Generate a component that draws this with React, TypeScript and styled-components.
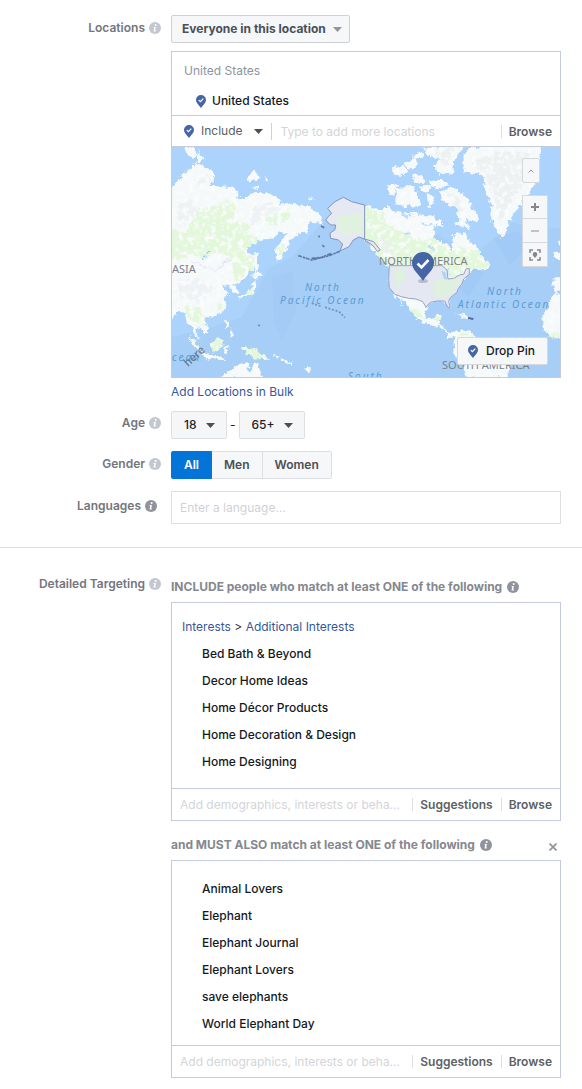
import React, { useState } from "react";
import styled, { createGlobalStyle, css } from "styled-components";

const GlobalStyle = createGlobalStyle`
  *, *::before, *::after { box-sizing: border-box; }
  body {
    margin: 0;
    background: #fff;
    color: #1d2129;
    font-family: Inter, "Liberation Sans", sans-serif;
    font-size: 12px;
    line-height: 20px;
  }
  button, input, select { font: inherit; color: inherit; margin: 0; }
  ul { list-style: none; margin: 0; padding: 0; }
`;

const Page = styled.main`
  padding-top: 15px;
`;

const Section = styled.section`
  display: grid;
  grid-template-columns: 161px minmax(0, 1fr);
  column-gap: 10px;
  padding-right: 21px;
`;

const FieldLabel = styled.div<{ $dark?: boolean; $top?: number }>`
  display: flex;
  justify-content: flex-end;
  align-items: center;
  gap: 4px;
  height: 20px;
  margin-top: ${(p) => p.$top ?? 3}px;
  padding-right: ${(p) => (p.$dark ? 4 : 0)}px;
  color: #73767c;
  font-weight: 600;
`;

const Field = styled.div<{ $gap: number }>`
  margin-bottom: ${(p) => p.$gap}px;
`;

const InfoButton = styled.button<{ $dark?: boolean }>`
  display: block;
  flex: none;
  width: 12px;
  height: 12px;
  padding: 0;
  border: 0;
  background: none;
  color: ${(p) => (p.$dark ? "#90939c" : "#c3c7cf")};
  svg { display: block; }
`;

const AudienceButton = styled.button`
  display: inline-flex;
  align-items: center;
  gap: 7px;
  height: 28px;
  padding: 0 7px 0 10px;
  border: 1px solid #ced0d4;
  border-radius: 2px;
  background: #f6f7f9;
  color: #4b4f56;
  font-weight: 700;
`;

const Box = styled.div`
  border: 1px solid #c3cbdc;
  background: #fff;
`;

const LocationBox = styled(Box)`
  margin-top: 8px;
`;

const LocationList = styled.div`
  padding: 9px 12px 4px;
`;

const Country = styled.div`
  color: #90949c;
`;

const Place = styled.div`
  display: flex;
  align-items: center;
  gap: 6px;
  padding: 10px 0 0 12px;
  font-weight: 500;
  color: #141823;
`;

const Footer = styled.div<{ $left: number; $height: number }>`
  display: flex;
  align-items: center;
  height: ${(p) => p.$height}px;
  padding: 0 8px 0 ${(p) => p.$left}px;
  border-top: 1px solid #c3cbdc;
`;

const IncludeButton = styled.button`
  display: flex;
  align-items: center;
  gap: 7px;
  padding: 0 8px 0 0;
  height: 17px;
  border: 0;
  border-right: 1px solid #ccd0d9;
  background: none;
  color: #5a5e66;
  svg:last-child { margin-left: 4px; }
`;

const Search = styled.input<{ $left: number }>`
  flex: 1;
  min-width: 0;
  padding: 1px 12px 0 ${(p) => p.$left}px;
  border: 0;
  outline: 0;
  background: none;
  text-overflow: ellipsis;
  &::placeholder { color: #d3d5d9; opacity: 1; }
`;

const FooterButton = styled.button`
  height: 13px;
  padding: 0 8px 0 7px;
  border: 0;
  border-left: 1px solid #dddfe2;
  background: none;
  color: #5c5f66;
  font-weight: 600;
  line-height: 13px;
  &:last-child { padding-right: 0; }
`;

const MapView = styled.div`
  position: relative;
  height: 231px;
  overflow: hidden;
  border-top: 1px solid #c3cbdc;
  background: #a9d2f9;
`;

const MapDrawing = styled.svg`
  display: block;
  width: 100%;
  height: 100%;
`;

const mapControl = css`
  display: flex;
  align-items: center;
  justify-content: center;
  padding: 0;
  border: 1px solid #d6d8db;
  background: #f6f7f8;
`;

const CollapseButton = styled.button`
  ${mapControl}
  position: absolute;
  top: 11px;
  right: 20px;
  width: 18px;
  height: 25px;
  border-radius: 2px;
`;

const ZoomControls = styled.div`
  position: absolute;
  top: 48px;
  right: 12px;
  width: 26px;
`;

const ZoomButton = styled.button`
  ${mapControl}
  width: 100%;
  height: 24px;
  & + & { border-top: 0; }
`;

const DropPin = styled.button`
  ${mapControl}
  position: absolute;
  right: 12px;
  bottom: 12px;
  gap: 8px;
  width: 91px;
  height: 28px;
  padding-right: 2px;
  border-radius: 2px;
  font-weight: 500;
  color: #141823;
`;

const Link = styled.a`
  color: #365899;
  text-decoration: none;
`;

const BulkLink = styled(Link)`
  display: block;
  margin-top: 4px;
`;

const AgeRange = styled.div`
  display: flex;
  align-items: center;
  gap: 3px;
`;

const SelectWrap = styled.span<{ $width: number }>`
  position: relative;
  display: block;
  width: ${(p) => p.$width}px;
  svg {
    position: absolute;
    right: 12px;
    top: 12px;
    pointer-events: none;
  }
`;

const Select = styled.select`
  appearance: none;
  display: block;
  width: 100%;
  height: 28px;
  padding: 0 12px;
  border: 1px solid #dddfe2;
  border-radius: 2px;
  background: #f5f6f7;
  color: #1d2129;
  font-weight: 500;
`;

const Segments = styled.div`
  display: flex;
`;

const Segment = styled.label`
  height: 28px;
  padding: 0 12px;
  border: 1px solid #dddfe2;
  background: #f6f7f9;
  color: #4b4f56;
  font-weight: 600;
  line-height: 26px;
  & + & { border-left: 0; }
  &:first-child { border-radius: 2px 0 0 2px; }
  &:last-child { border-radius: 0 2px 2px 0; }
  &:has(:checked) {
    border-color: #0474d8;
    background: #0474d8;
    color: #fff;
  }
`;

const HiddenRadio = styled.input`
  position: absolute;
  opacity: 0;
  pointer-events: none;
`;

const LanguageInput = styled.input`
  display: block;
  width: 100%;
  height: 33px;
  padding: 0 8px;
  border: 1px solid #dddfe2;
  outline: 0;
  &::placeholder { color: #d0d2d6; opacity: 1; }
`;

const Divider = styled.hr`
  margin: 0 0 26px;
  border: 0;
  border-top: 1px solid #dddfe2;
`;

const Rules = styled.div`
  display: grid;
  gap: 14px;
  padding: 3px 0 10px;
`;

const RuleHeading = styled.div`
  display: flex;
  align-items: center;
  gap: 5px;
  height: 20px;
  margin-bottom: 5px;
  color: #85888e;
  font-weight: 700;
`;

const RemoveButton = styled.button`
  margin-left: auto;
  padding: 3px 4px 0;
  border: 0;
  background: none;
  color: #90949c;
  svg { display: block; }
`;

const Breadcrumb = styled.nav`
  padding-left: 10px;
  line-height: 27px;
`;

const Interests = styled.div<{ $top: number; $bottom: number }>`
  padding: ${(p) => p.$top}px 0 ${(p) => p.$bottom}px;
`;

const Interest = styled.li`
  padding-left: 30px;
  line-height: 27px;
  font-weight: 500;
  color: #141823;
`;

const Info = ({ about, dark }: { about: string; dark?: boolean }) => (
  <InfoButton type="button" aria-label={`About ${about}`} $dark={dark}>
    <svg width="12" height="12" viewBox="0 0 12 12">
      <circle cx="6" cy="6" r="6" fill="currentColor" />
      <circle cx="6.7" cy="3" r="1" fill="#fff" />
      <path d="M4.7 5h2.2L6.2 8.6h.8l-.2 1H4.5l.7-3.6h-.7z" fill="#fff" />
    </svg>
  </InfoButton>
);

const Caret = ({ color = "#4b4f56" }: { color?: string }) => (
  <svg width="9" height="5" viewBox="0 0 9 5">
    <path d="M0 0h9L4.500 5z" fill={color} />
  </svg>
);

const Pin = () => (
  <svg width="10" height="13" viewBox="0 0 10 13">
    <path d="M5 0a5 5 0 0 1 5 5c0 3-3 5-5 8C3 10 0 8 0 5a5 5 0 0 1 5-5z" fill="#4565a5" />
    <path d="M2.800 5.100l1.600 1.500 2.900-3" fill="none" stroke="#fff" strokeWidth="1.300" />
  </svg>
);

const SEA_TEXT = {
  fill: "#5b9bd3",
  fontSize: 10,
  fontStyle: "italic",
  fontFamily: '"Noto Sans", sans-serif',
  letterSpacing: 2,
} as const;

const LAND_TEXT = {
  fill: "#7d8288",
  fontSize: 11,
  fontFamily: '"Noto Sans", sans-serif',
} as const;

const WorldMap = () => (
  <MapDrawing viewBox="0 0 388 230" preserveAspectRatio="xMidYMid slice" role="img" aria-label="World map">
    <defs>
      {/* ragged coastlines, with a mottled terrain over the land */}
      <filter id="coast" x="-5%" y="-5%" width="110%" height="110%" colorInterpolationFilters="sRGB">
        <feTurbulence type="fractalNoise" baseFrequency="0.200" numOctaves="3" seed="4" result="n" />
        <feDisplacementMap in="SourceGraphic" in2="n" scale="7" xChannelSelector="R" yChannelSelector="G" result="land" />
        <feTurbulence type="fractalNoise" baseFrequency="0.180" numOctaves="4" seed="9" />
        <feColorMatrix values="0 0 0 0 .98  0 0 0 0 .99  0 0 0 0 .99  4 0 0 0 -1.900" />
        <feComposite in2="land" operator="in" result="snow" />
        <feMerge><feMergeNode in="land" /><feMergeNode in="snow" /></feMerge>
      </filter>
    </defs>
    <rect width="388" height="230" fill="#a6cef7" />
    <path d="M0 0H388V82L340 76 300 110 270 90 190 62 160 68 150 76 120 110 96 122 70 170 40 180 0 190z" fill="#abd3fb" />
    <path d="M322 92l24-8 12 14-20 20zM286 140l14-20 12 6-16 24z" fill="#a2caf6" />
    <path d="M100 130l20-6 4 40-14 30-8-20z" fill="#a3cbf6" />

    {/* Asia, Australia and the Pacific islands */}
    <g filter="url(#coast)">
      <g transform="translate(-7 -2) scale(.3333)">
        <g fill="#f6f9fa">
          <path d="M0 132L20 128 45 100 70 75 95 55 125 70 150 80V105L135 120 165 125 205 125 220 140 215 155 245 160 262 145 300 143 335 155 350 165 345 178 400 178 430 185 460 205 475 222 468 235 440 230 432 240V262L410 265 390 275 370 290 362 320 345 345 335 350 330 320 345 290 365 265 345 262 325 280 300 285 270 288 250 305 247 325 268 330 272 350 262 375 240 400 215 415 205 420 222 440 218 450 205 445 198 425 175 420 180 435 190 440 178 465 183 490 165 505 140 515 120 518 118 530 132 545 125 565 105 550 95 545 92 565 105 590 115 600 95 580 85 560 80 540 65 530 60 505 40 500 20 525H0z" />
          <path d="M55 5H85L95 30 80 38 60 20zM100 15L118 45 95 52zM250 85L268 80 285 92 275 108 250 105zM297 98l12 2-3 10zM263 122l15 2 2 8-16-2zM430 155h12v8h-12z" />
          <path d="M268 320l12 8-2 40-8 12-4-30zM262 388l12-6 16 6-14 12-12 0zM266 402l8 18-8 22-24 8-16 14-4-10 22-10 18-12z" />
          <path d="M180 525l10 4 2 20-8 2zM194 552l15 18-12 8z" />
          <path d="M165 700L200 670 215 660 230 655 250 652 247 668 262 680 268 655 278 660 284 685 300 700z" />
          <path d="M72 572L90 585 115 628 100 618 82 598zM110 625L155 632 185 644 150 644 115 636zM178 600l18 2-14 10 8 16-12-6zM322 625l22 10-6 6zM205 600l10 0M350 640l35 14-4 8-30-14zM420 672l14-6v14z" />
        </g>
        <g fill="#e3f7db">
          <path d="M0 250L60 265 75 240 100 190 150 185 185 165 208 175 210 225 250 235 260 275 290 282 250 305 245 330 268 335 262 375 232 400 205 415 208 390 200 350 195 330 150 320 120 345 80 325 50 345 0 335z" />
          <path d="M300 220L345 200 375 190 375 215 345 240 305 232zM338 310l20-20 0 30-15 20zM60 480l30 5 32 25-5 35-20-8-35-25zM155 480l25-10 0 22-25 10zM235 446l32-20-4 14-22 10z" />
          <path d="M132 600L160 575 173 590 170 610 150 622 135 612zM225 605L250 608 285 618 300 635 318 645 295 645 270 640 240 622zM78 578l14 10 18 32-20-18z" />
        </g>
        <g fill="#ecf0f1" opacity=".7">
          <path d="M40 175l40-10 20 30-30 40-35 10zM90 105l40-15 10 15-40 20zM265 180l60-10 20 25-50 20-40 30zM40 405l50-5 60 30-50 40-50-10z" />
        </g>
        <path d="M112 342L122 335 134 316" stroke="#9bcbf5" strokeWidth="5" fill="none" />
        <path d="M75 350L110 362 150 375 170 365 172 350 200 345" stroke="#e2dff0" strokeWidth="3" fill="none" />
      </g>

      {/* the Americas, Greenland, Africa */}
      <g transform="translate(190 -2) scale(.3333)">
        <g fill="#f6f9fa">
          <path d="M0 180L30 185 55 195 75 185 100 200 130 205 160 200 185 215 210 210 225 225 215 250 212 275 240 290 262 305 270 320 275 300 270 275 285 262 312 270 322 290 345 305 360 330 330 345 345 355 372 345 385 368 360 375 335 370 320 388 300 410 290 430 270 450 262 465 266 490 252 480 250 467 225 468 195 482 188 500 192 520 215 525 222 508 240 512 230 535 248 550 265 568 290 555 330 562 352 585 400 590 440 650V700H315L300 660 280 630 275 600 280 578 262 578 240 550 200 538 165 522 150 498 130 470 112 452 125 485 118 475 100 450 85 430 78 400 82 370 60 345 40 320 0 275z" />
          <path d="M78 120L108 115 100 148 80 150zM105 130L150 120 168 150 178 182 130 186 100 172zM90 70l30-10 20 20-20 12-28-4zM125 60l25-20 20 15-25 20zM150 92l30-6 10 22-25 10zM178 120l25 0 0 25-22 0zM205 105l35 0 20 15-25 10-28-6zM195 150l22 0 0 30-18 5zM150 30l30-10 5 20-28 8z" />
          <path d="M178 12L240 4H305L288 30 272 60 272 88 235 86 212 62 240 42 200 32z" />
          <path d="M235 140L270 125 300 150 320 165 330 190 350 210 345 235 325 225 305 215 322 245 310 250 278 238 290 225 285 190 260 180 240 165zM215 225l20 0 5 22-18-4z" />
          <path d="M300 50L320 10 390 0H540L530 60V100L500 145 480 170 460 200 440 230 428 275 415 275 395 240 385 210 390 180 370 140 365 95 350 85 310 80z" />
          <path d="M280 505l40 8 15 10-25-2zM575 400h30v40h-30zM538 520L558 490 578 440 605 450V582L570 575 545 545zM572 330l14-12 12 5v22h-20zM585 290l14-5v20z" />
        </g>
        <g fill="#e3f7db">
          <path d="M5 185L60 200 75 235 110 255 150 275 190 285 212 278 240 292 268 325 290 300 312 320 345 312 360 332 385 365 335 370 320 388 262 400 240 375 200 362 90 362 60 345 35 305 5 278zM140 490l20 0 30 30-25 0zM222 512l16 2-6 20-16-6zM300 562l35 8-5 20-40 0zM420 640l18 20-4 20zM545 555l50 10v16l-25-2z" />
        </g>
        <g fill="#ebeff0">
          <path d="M330 50L390 20H500L505 80 470 140 430 200 415 230 395 150 370 90zM215 10l60 0-20 60-20-20zM255 145l30 10 20 40-15 5zM50 270l30 30 20 50-30-20z" opacity=".8" />
        </g>
        <path d="M120 208l16 8 12-8M180 235l20 8 14-8M118 268l30-8M200 300l10 16 8-4M235 370l24 10 0 20-16-4" fill="none" stroke="#b4d8fa" strokeWidth="6" />
      </g>
    </g>

    {/* selected country */}
    <g transform="translate(-7 -2) scale(.3333)" strokeLinejoin="round">
      <path d="M599 180L560 170 535 157 510 170 488 190 500 205 490 215 482 225 497 240 512 240 510 254 495 265 497 280 520 285 533 297 525 318 552 305 565 285 582 276 599 282 626 290 646 315 638 320 622 300 599 285z" fill="#e6e9f1" stroke="#8494bd" strokeWidth="3" />
      <path d="M516 215l14-6 18 4 20-10 27 6v56l-30-2-20 10-16-8-13-20z" fill="#e0f1df" />
      <path d="M525 319L490 333 440 345 400 332M440 340l30-3 30-12M468 243l10 5M472 300l6 6M461 272l3 5" fill="none" stroke="#6078a8" strokeWidth="5" strokeDasharray="12 2 7 3" />
      <path d="M440 475L470 484M480 487L522 500 540 518M279 541h6" fill="none" stroke="#7090c0" strokeWidth="5" strokeDasharray="6 5" />
    </g>
    <g transform="translate(190 -2) scale(.3333)" strokeLinejoin="round">
      <path d="M82 362L240 362 255 375 258 402 275 400 292 390 305 388 312 372 322 370 322 388 305 402 300 416 288 432 285 442 265 458 260 468 264 488 258 488 248 468 225 468 205 472 192 486 182 470 162 462 140 460 118 455 98 448 82 428 80 400z" fill="#e5e8f2" stroke="#98a4c4" strokeWidth="3" />
      <path d="M92 375l18-5 20 4-4 16 6 14-14 6-8 16-14-10 4-18zM212 424l10-16 20-8 20 6 24-4 14-12-4 20-16 20-20 22-26 8-22-6 4-14z" fill="#dff0de" />
      <path d="M238 378l12 3 6 24-10-4z" fill="#add3f6" />
      <path d="M318 519l16 3" stroke="#526a9d" strokeWidth="6" />
    </g>

    <text x="0" y="126" {...LAND_TEXT}>ASIA</text>
    <text x="207" y="118" {...LAND_TEXT}>NORTH AMERICA</text>
    <text x="270" y="222" {...LAND_TEXT}>SOUTH AMERICA</text>
    <text x="133" y="144" {...SEA_TEXT}>North</text>
    <text x="108" y="157" {...SEA_TEXT}>Pacific Ocean</text>
    <text x="315" y="148" {...SEA_TEXT}>North</text>
    <text x="286" y="161" {...SEA_TEXT}>Atlantic Ocean</text>
    <text x="176" y="233" {...SEA_TEXT}>South</text>
    <text x="0" y="214" {...SEA_TEXT}>cean</text>
    <text x="16" y="220" transform="rotate(-42 16 220)" fill="#5f6f86" opacity=".8" fontSize="12" fontWeight="700" fontFamily="Lato, sans-serif">here</text>

    <ellipse cx="251" cy="134" rx="5" ry="2" fill="#70809a" opacity=".4" />
    <g transform="translate(240 105)">
      <path d="M11 0a11 11 0 0 1 11 11c0 7-7 11-11 18C7 22 0 18 0 11A11 11 0 0 1 11 0z" fill="#4565a5" />
      <path d="M5.500 11.500l4 4 7-7.500" fill="none" stroke="#fff" strokeWidth="2.600" />
    </g>
  </MapDrawing>
);

const interests = ["Bed Bath & Beyond", "Decor Home Ideas", "Home Décor Products", "Home Decoration & Design", "Home Designing"];
const narrowed = ["Animal Lovers", "Elephant", "Elephant Journal", "Elephant Lovers", "save elephants", "World Elephant Day"];
const genders = ["All", "Men", "Women"];

const InterestFooter = () => (
  <Footer $left={0} $height={32}>
    <Search $left={8} aria-label="Add interests" placeholder="Add demographics, interests or behaviors" />
    <FooterButton type="button">Suggestions</FooterButton>
    <FooterButton type="button">Browse</FooterButton>
  </Footer>
);

export default function App() {
  const [gender, setGender] = useState("All");
  return (
    <Page>
      <GlobalStyle />
      <Section>
        <FieldLabel>Locations <Info about="locations" /></FieldLabel>
        <Field $gap={9}>
          <AudienceButton type="button">Everyone in this location <Caret color="#90949c" /></AudienceButton>
          <LocationBox>
            <LocationList>
              <Country>United States</Country>
              <Place><Pin />United States</Place>
            </LocationList>
            <Footer $left={12} $height={31}>
              <IncludeButton type="button"><Pin />Include <Caret /></IncludeButton>
              <Search $left={9} aria-label="Add locations" placeholder="Type to add more locations" />
              <FooterButton type="button">Browse</FooterButton>
            </Footer>
            <MapView>
              <WorldMap />
              <CollapseButton type="button" aria-label="Collapse map">
                <svg width="6" height="4" viewBox="0 0 6 4"><path d="M.5 3.500L3 1l2.500 2.500" fill="none" stroke="#90949c" /></svg>
              </CollapseButton>
              <ZoomControls>
                <ZoomButton type="button" aria-label="Zoom in">
                  <svg width="8" height="8" viewBox="0 0 8 8"><path d="M0 4h8M4 0v8" stroke="#85888e" strokeWidth="2" /></svg>
                </ZoomButton>
                <ZoomButton type="button" aria-label="Zoom out">
                  <svg width="8" height="8" viewBox="0 0 8 8"><path d="M0 4h8" stroke="#bec2c9" strokeWidth="2" /></svg>
                </ZoomButton>
                <ZoomButton type="button" aria-label="Fit to selection">
                  <svg width="12" height="12" viewBox="0 0 12 12">
                    <path d="M1 4V1h3M8 1h3v3M11 8v3H8M4 11H1V8" fill="none" stroke="#85888e" strokeWidth="1.500" />
                    <path d="M6 3a2.300 2.300 0 0 1 2.300 2.300C8.300 7 7 7.500 6 9 5 7.500 3.700 7 3.700 5.300A2.300 2.300 0 0 1 6 3z" fill="#85888e" />
                  </svg>
                </ZoomButton>
              </ZoomControls>
              <DropPin type="button"><Pin />Drop Pin</DropPin>
            </MapView>
          </LocationBox>
          <BulkLink href="#bulk">Add Locations in Bulk</BulkLink>
        </Field>

        <FieldLabel $top={2}>Age <Info about="age" /></FieldLabel>
        <Field $gap={12}>
          <AgeRange>
            <SelectWrap $width={56}>
              <Select aria-label="Minimum age" defaultValue="18"><option>18</option><option>21</option></Select>
              <Caret />
            </SelectWrap>
            -
            <SelectWrap $width={66}>
              <Select aria-label="Maximum age" defaultValue="65+"><option>64</option><option>65+</option></Select>
              <Caret />
            </SelectWrap>
          </AgeRange>
        </Field>

        <FieldLabel>Gender <Info about="gender" /></FieldLabel>
        <Field $gap={12}>
          <Segments role="radiogroup" aria-label="Gender">
            {genders.map((g) => (
              <Segment key={g}>
                <HiddenRadio type="radio" name="gender" checked={gender === g} onChange={() => setGender(g)} />
                {g}
              </Segment>
            ))}
          </Segments>
        </Field>

        <FieldLabel $dark $top={5}><label htmlFor="languages">Languages</label> <Info about="languages" dark /></FieldLabel>
        <Field $gap={23}>
          <LanguageInput id="languages" placeholder="Enter a language..." />
        </Field>
      </Section>

      <Divider />

      <Section>
        <FieldLabel $top={0}>Detailed Targeting <Info about="detailed targeting" /></FieldLabel>
        <Rules>
          <div>
            <RuleHeading>INCLUDE people who match at least ONE of the following <Info about="included people" dark /></RuleHeading>
            <Box>
              <Interests $top={10} $bottom={13}>
                <Breadcrumb aria-label="Interest category">
                  <Link href="#interests">Interests</Link> &gt; <Link href="#additional">Additional Interests</Link>
                </Breadcrumb>
                <ul>{interests.map((i) => <Interest key={i}>{i}</Interest>)}</ul>
              </Interests>
              <InterestFooter />
            </Box>
          </div>
          <div>
            <RuleHeading>
              and MUST ALSO match at least ONE of the following <Info about="narrowed people" dark />
              <RemoveButton type="button" aria-label="Remove rule">
                <svg width="8" height="8" viewBox="0 0 8 8"><path d="M.5.5l7 7M7.500.5l-7 7" stroke="currentColor" strokeWidth="1.700" /></svg>
              </RemoveButton>
            </RuleHeading>
            <Box>
              <Interests $top={14} $bottom={8}>
                <ul>{narrowed.map((i) => <Interest key={i}>{i}</Interest>)}</ul>
              </Interests>
              <InterestFooter />
            </Box>
          </div>
        </Rules>
      </Section>
    </Page>
  );
}
